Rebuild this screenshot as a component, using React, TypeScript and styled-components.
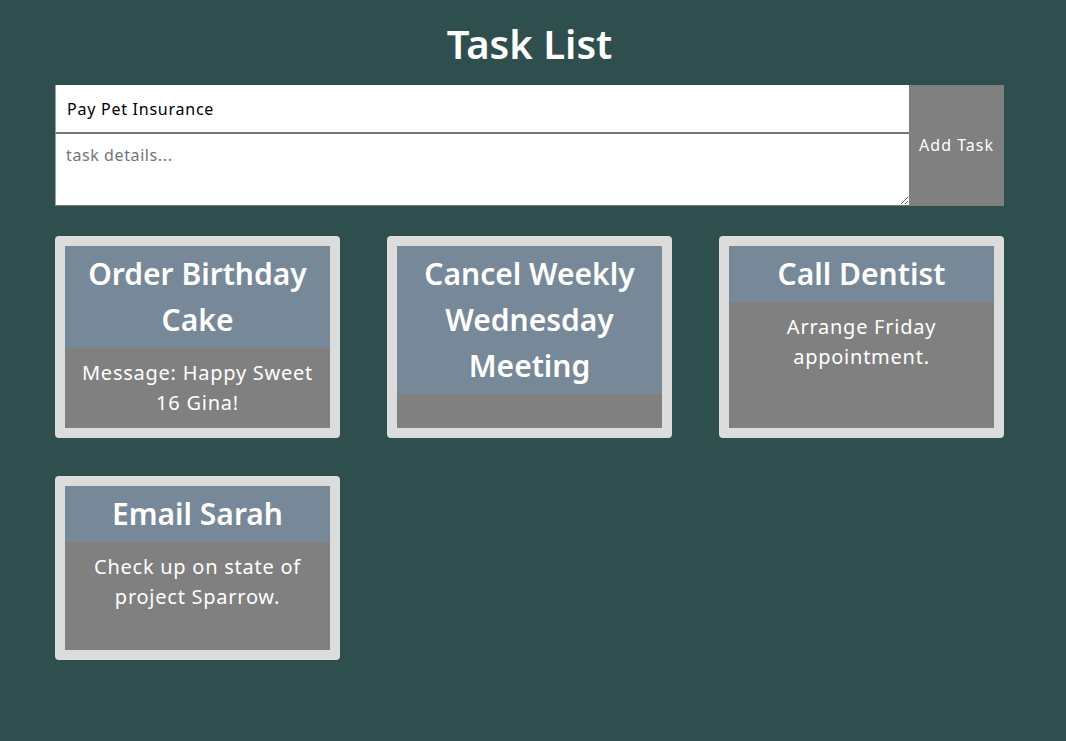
import React from "react";
import styled, { createGlobalStyle } from "styled-components";

const GlobalStyle = createGlobalStyle`
  html, body {
    margin: 0;
    padding: 0;
    background: #2f4f4f;
    font-family: "Noto Sans", "Open Sans", sans-serif;
  }
  * { box-sizing: border-box; }
`;

const Page = styled.div`
  padding: 14px 62px 40px 55px;
  display: flex;
  flex-direction: column;
`;

const Title = styled.h1`
  margin: 0 0 11px 0;
  text-align: center;
  color: #fff;
  font-size: 40px;
  line-height: 60px;
  font-weight: 600;
`;

const Form = styled.form`
  display: flex;
  height: 121px;
  margin-bottom: 30px;
`;

const Fields = styled.div`
  flex: 1;
  display: flex;
  flex-direction: column;
`;

const TitleInput = styled.input`
  height: 49px;
  border: none;
  border-left: 1px solid #a0a0a0;
  border-bottom: 2px solid #767676;
  padding: 0 11px;
  font-family: inherit;
  font-size: 16px;
  letter-spacing: 0.75px;
  color: #000;
  outline: none;
`;

const DetailsInput = styled.textarea`
  flex: 1;
  border: none;
  border-left: 1px solid #a0a0a0;
  border-bottom: 1px solid #767676;
  padding: 10px 10px;
  font-family: inherit;
  font-size: 16px;
  letter-spacing: 0.6px;
  outline: none;
  resize: vertical;
  &::placeholder { color: #757575; }
`;

const AddButton = styled.button`
  width: 95px;
  border: none;
  background: #808080;
  color: #fff;
  font-family: inherit;
  font-size: 16px;
  letter-spacing: 1px;
  padding: 0 0 2px 0;
  cursor: pointer;
`;

const Grid = styled.div`
  display: grid;
  grid-template-columns: repeat(3, 1fr);
  column-gap: 47px;
  row-gap: 38px;
`;

const Card = styled.div`
  display: flex;
  flex-direction: column;
  min-height: 184px;
  border: 10px solid #dcdcdc;
  border-radius: 4px;
  text-align: center;
  color: #fff;
`;

const CardTitle = styled.h2`
  margin: 0;
  padding: 5px 8px;
  background: #778899;
  font-size: 30px;
  line-height: 46px;
  font-weight: 600;
`;

const CardBody = styled.p`
  margin: 0;
  flex: 1;
  min-height: 34px;
  padding: 10px 10px;
  background: #808080;
  font-size: 20px;
  line-height: 30px;
  letter-spacing: 0.75px;
`;

const tasks = [
  { title: "Order Birthday Cake", details: "Message: Happy Sweet 16 Gina!" },
  { title: "Cancel Weekly Wednesday Meeting", details: "" },
  { title: "Call Dentist", details: "Arrange Friday appointment." },
  { title: "Email Sarah", details: "Check up on state of project Sparrow." },
];

export default function App() {
  return (
    <>
      <GlobalStyle />
      <Page>
        <Title>Task List</Title>
        <Form onSubmit={(e) => e.preventDefault()}>
          <Fields>
            <TitleInput defaultValue="Pay Pet Insurance" />
            <DetailsInput placeholder="task details..." />
          </Fields>
          <AddButton type="submit">Add Task</AddButton>
        </Form>
        <Grid>
          {tasks.map((t) => (
            <Card key={t.title}>
              <CardTitle>{t.title}</CardTitle>
              <CardBody>{t.details}</CardBody>
            </Card>
          ))}
        </Grid>
      </Page>
    </>
  );
}
